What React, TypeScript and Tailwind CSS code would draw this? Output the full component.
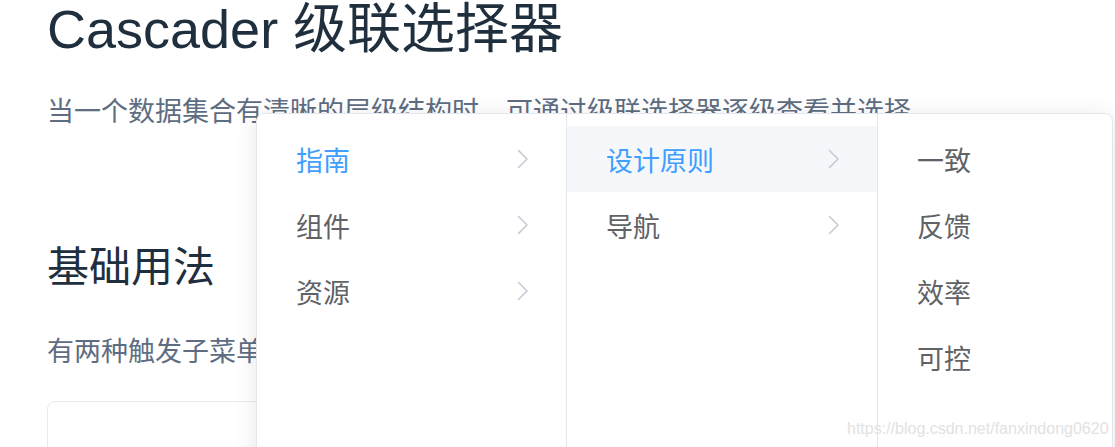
import React from "react"

const font = "font-['Liberation_Sans','Noto_Sans_CJK_SC',sans-serif]"

// cascader panel data
const columns = [
  {
    width: "w-[310px]",
    items: [
      { label: "指南", active: true, hover: false, arrow: true },
      { label: "组件", active: false, hover: false, arrow: true },
      { label: "资源", active: false, hover: false, arrow: true },
    ],
  },
  {
    width: "w-[311px]",
    items: [
      { label: "设计原则", active: true, hover: true, arrow: true },
      { label: "导航", active: false, hover: false, arrow: true },
    ],
  },
  {
    width: "flex-1",
    items: [
      { label: "一致", active: false, hover: false, arrow: false },
      { label: "反馈", active: false, hover: false, arrow: false },
      { label: "效率", active: false, hover: false, arrow: false },
      { label: "可控", active: false, hover: false, arrow: false },
    ],
  },
]

function Chevron() {
  return (
    <svg width="14" height="20" viewBox="0 0 14 20" fill="none" className="shrink-0">
      <path d="M2.5 1.5 L11 10 L2.5 18.5" stroke="#c8ccd4" strokeWidth="1.7" strokeLinecap="round" strokeLinejoin="round" />
    </svg>
  )
}

function CascaderPanel() {
  return (
    <div className="absolute left-[256px] top-[113px] flex h-[400px] w-[857px] rounded-[8px] border border-[#e4e7ed] bg-white shadow-[0_4px_24px_rgba(0,0,0,0.1)]">
      {columns.map((col, ci) => (
        <div
          key={ci}
          className={`${col.width} pt-[12px] ${ci < columns.length - 1 ? "border-r border-[#e4e7ed]" : ""}`}
        >
          {col.items.map((item) => (
            <div
              key={item.label}
              className={`flex h-[66px] items-center justify-between pl-[39px] pr-[36px] ${
                item.hover ? "bg-[#f5f7fa]" : ""
              }`}
            >
              <span
                className={`pt-[6px] text-[27px] leading-[27px] ${item.active ? "text-[#409eff]" : "text-[#606266]"}`}
              >
                {item.label}
              </span>
              {item.arrow && <Chevron />}
            </div>
          ))}
        </div>
      ))}
    </div>
  )
}

export default function App() {
  return (
    <div className={`relative h-[447px] w-[1115px] overflow-hidden bg-white ${font}`}>
      <div className="flex flex-col pl-[47px]">
        <h1 className="pt-[2px] text-[54px] leading-[54px] font-normal text-[#1f2f3d]">
          Cascader 级联选择器
        </h1>
        <p className="mt-[43px] whitespace-nowrap text-[27px] leading-[27px] text-[#5e6d82]">
          当一个数据集合有清晰的层级结构时，可通过级联选择器逐级查看并选择。
        </p>
        <h3 className="mt-[121px] text-[42px] leading-[42px] font-normal text-[#1f2f3d]">基础用法</h3>
        <p className="mt-[50px] whitespace-nowrap text-[27px] leading-[27px] text-[#5e6d82]">
          有两种触发子菜单的方式
        </p>
        <div className="mt-[35px] h-[120px] w-[1000px] rounded-[8px] border border-[#e6e9ee]" />
      </div>

      <CascaderPanel />

      <div className="absolute left-[847px] top-[421px] font-['Liberation_Sans',sans-serif] text-[16px] leading-[16px] text-[#e2e2e2]">
        https://blog.csdn.net/fanxindong0620
      </div>
    </div>
  )
}
